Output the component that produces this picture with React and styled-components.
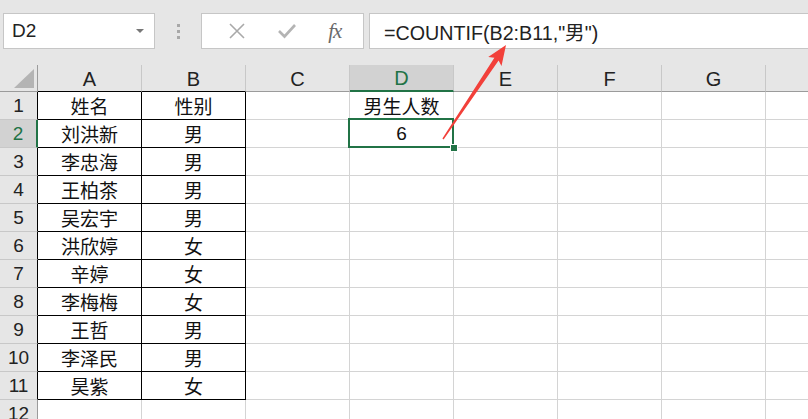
import React from 'react';
import styled, { createGlobalStyle } from 'styled-components';

const GlobalStyle = createGlobalStyle`
  body {
    margin: 0;
    background: #fff;
    font-family: "Liberation Sans", "Noto Sans CJK SC", sans-serif;
  }
`;

const GREEN = '#217346';
const COLS = ['A', 'B', 'C', 'D', 'E', 'F', 'G', 'H'];

const rows = [
  { A: '姓名', B: '性别', D: '男生人数' },
  { A: '刘洪新', B: '男', D: '6' },
  { A: '李忠海', B: '男' },
  { A: '王柏茶', B: '男' },
  { A: '吴宏宇', B: '男' },
  { A: '洪欣婷', B: '女' },
  { A: '辛婷', B: '女' },
  { A: '李梅梅', B: '女' },
  { A: '王哲', B: '男' },
  { A: '李泽民', B: '男' },
  { A: '昊紫', B: '女' },
  {},
  {},
];

const Page = styled.div`
  position: relative;
  width: 808px;
  height: 419px;
  overflow: hidden;
  background: #fff;
`;

const Toolbar = styled.div`
  display: flex;
  align-items: flex-start;
  height: 65px;
  padding: 13px 0 0 3px;
  box-sizing: border-box;
  background: #e6e6e6;
`;

const Box = styled.div`
  display: flex;
  align-items: center;
  height: 36px;
  box-sizing: border-box;
  background: #fff;
  border: 1px solid #c6c6c6;
`;

const NameBox = styled(Box)`
  width: 152px;
  justify-content: space-between;
  padding: 0 10px 0 8px;
  font-size: 19px;
  color: #222;
`;

const Caret = styled.span`
  width: 0;
  height: 0;
  border-left: 4px solid transparent;
  border-right: 4px solid transparent;
  border-top: 4px solid #777;
`;

const Grip = styled.div`
  width: 46px;
  height: 36px;
  display: flex;
  flex-direction: column;
  align-items: center;
  justify-content: center;
  gap: 3px;

  span {
    width: 3px;
    height: 3px;
    background: #a8a8a8;
  }
`;

const FxBox = styled(Box)`
  width: 163px;
  justify-content: space-around;
  padding: 0 6px 0 10px;
`;

const FxLabel = styled.span`
  font-family: "Liberation Serif", serif;
  font-style: italic;
  font-size: 21px;
  color: #6a6a6a;
  letter-spacing: -1px;
`;

const FormulaBox = styled(Box)`
  flex: 1;
  margin-left: 5px;
  margin-right: -2px;
  padding-left: 14px;
  font-size: 19.7px;
  color: #222;
`;

const Sheet = styled.div`
  display: grid;
  grid-template-columns: 38px repeat(8, 104px);
  grid-template-rows: 27px repeat(13, 28px);
  font-size: 19px;
`;

const Corner = styled.div`
  background: #e6e6e6;
  border-right: 1px solid #9b9b9b;
  border-bottom: 1px solid #9b9b9b;
  box-sizing: border-box;
  display: flex;
  align-items: flex-end;
  justify-content: flex-end;
  padding: 0 3px 3px 0;

  svg {
    display: block;
  }
`;

const ColHead = styled.div`
  display: flex;
  align-items: center;
  justify-content: center;
  box-sizing: border-box;
  padding-top: 2px;
  background: ${(p) => (p.$active ? '#d2d2d2' : '#e6e6e6')};
  color: ${(p) => (p.$active ? GREEN : '#222')};
  font-size: 20px;
  border-right: 1px solid #c8c8c8;
  border-bottom: ${(p) =>
    p.$active ? `2px solid ${GREEN}` : `1px solid ${p.$edge || '#9b9b9b'}`};
`;

const RowHead = styled.div`
  display: flex;
  align-items: center;
  justify-content: center;
  box-sizing: border-box;
  padding-top: 1px;
  background: ${(p) => (p.$active ? '#d2d2d2' : '#e6e6e6')};
  color: ${(p) => (p.$active ? GREEN : '#222')};
  border-bottom: 1px solid #c8c8c8;
  border-right: ${(p) =>
    p.$active ? `2px solid ${GREEN}` : `1px solid ${p.$edge || '#9b9b9b'}`};
`;

const Cell = styled.div`
  position: relative;
  display: flex;
  align-items: center;
  justify-content: center;
  box-sizing: border-box;
  color: #111;
  border-right: 1px solid ${(p) => (p.$boxed ? '#000' : '#d4d4d4')};
  border-bottom: 1px solid ${(p) => (p.$boxed ? '#000' : '#d4d4d4')};
`;

const Selection = styled.div`
  position: absolute;
  z-index: 2;
  left: -2px;
  top: -2px;
  width: 106px;
  height: 30px;
  box-sizing: border-box;
  border: 2px solid ${GREEN};
  pointer-events: none;
`;

const FillHandle = styled.div`
  position: absolute;
  right: -6px;
  bottom: -6px;
  width: 8px;
  height: 8px;
  box-sizing: border-box;
  background: ${GREEN};
  border: 1px solid #fff;
`;

const Arrow = styled.svg`
  position: absolute;
  z-index: 3;
  left: 0;
  top: 0;
  pointer-events: none;
`;

const App = () => {
  return (
    <Page>
      <GlobalStyle />
      <Toolbar>
        <NameBox>
          <span>D2</span>
          <Caret />
        </NameBox>
        <Grip>
          <span />
          <span />
          <span />
        </Grip>
        <FxBox>
          <svg width="18" height="18" viewBox="0 0 18 18">
            <path d="M2 2 L16 16 M16 2 L2 16" stroke="#a9a9a9" strokeWidth="1.6" fill="none" />
          </svg>
          <svg width="20" height="16" viewBox="0 0 20 16">
            <path d="M2 8 L7.5 13.5 L18 2" stroke="#b4b4b4" strokeWidth="2.6" fill="none" />
          </svg>
          <FxLabel>fx</FxLabel>
        </FxBox>
        <FormulaBox>=COUNTIF(B2:B11,"男")</FormulaBox>
      </Toolbar>

      <Sheet>
        <Corner>
          <svg width="20" height="19" viewBox="0 0 20 19">
            <polygon points="0,19 20,19 20,0" fill="#b4b4b4" />
          </svg>
        </Corner>
        {COLS.map((c) => (
          <ColHead
            key={c}
            $active={c === 'D'}
            $edge={c === 'A' || c === 'B' ? '#000' : undefined}
          >
            {c}
          </ColHead>
        ))}
        {rows.map((row, i) => {
          const n = i + 1;
          const inTable = n <= 11;
          return (
            <React.Fragment key={n}>
              <RowHead $active={n === 2} $edge={inTable ? '#000' : undefined}>
                {n}
              </RowHead>
              {COLS.map((c) => (
                <Cell key={c} $boxed={inTable && (c === 'A' || c === 'B')}>
                  {row[c]}
                  {n === 2 && c === 'D' && (
                    <Selection>
                      <FillHandle />
                    </Selection>
                  )}
                </Cell>
              ))}
            </React.Fragment>
          );
        })}
      </Sheet>

      <Arrow width="808" height="419" viewBox="0 0 808 419">
        <polygon
          points="506,45 501.5,66.1 498.6,60.5 443.6,139.4 442.4,138.6 494.4,57.7 488.2,57.1"
          fill="#f2403a"
        />
      </Arrow>
    </Page>
  );
};

export default App;
